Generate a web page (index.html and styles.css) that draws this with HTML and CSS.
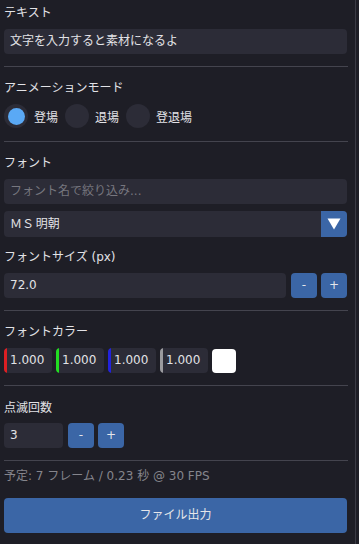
FILE: index.html
```html
<!DOCTYPE html>
<html lang="ja">
<head>
<meta charset="utf-8">
<link rel="stylesheet" href="styles.css">
</head>
<body>
<div class="window">
  <div class="panel">
    <div class="label first">テキスト</div>
    <div class="field m7">文字を入力すると素材になるよ</div>
    <div class="sep"></div>

    <div class="label">アニメーションモード</div>
    <div class="radios m7">
      <div class="radio"><span class="dot on"></span><span>登場</span></div>
      <div class="radio"><span class="dot"></span><span>退場</span></div>
      <div class="radio"><span class="dot"></span><span>登退場</span></div>
    </div>
    <div class="sep s13"></div>

    <div class="label">フォント</div>
    <div class="field m7 placeholder">フォント名で絞り込み...</div>
    <div class="combo m7">
      <div class="combo-text">ＭＳ 明朝</div>
      <div class="combo-btn"><svg width="14" height="12" viewBox="0 0 14 12"><path d="M0.5 0.5 H13.5 L7 11.5 Z" fill="#fff"/></svg></div>
    </div>

    <div class="label l11">フォントサイズ (px)</div>
    <div class="row m7">
      <div class="field grow">72.0</div>
      <div class="btn">-</div>
      <div class="btn">+</div>
    </div>
    <div class="sep"></div>

    <div class="label">フォントカラー</div>
    <div class="colors m7">
      <div class="cfield red">1.000</div>
      <div class="cfield green">1.000</div>
      <div class="cfield blue">1.000</div>
      <div class="cfield gray">1.000</div>
      <div class="swatch"></div>
    </div>
    <div class="sep"></div>

    <div class="label l13">点滅回数</div>
    <div class="row m6">
      <div class="field small">3</div>
      <div class="btn">-</div>
      <div class="btn">+</div>
    </div>
    <div class="sep"></div>

    <div class="info">予定: 7 フレーム / 0.23 秒 @ 30 FPS</div>
    <div class="export">ファイル出力</div>
  </div>
</div>
</body>
</html>
```
FILE: styles.css
```css
html, body {
  margin: 0;
  padding: 0;
  background: #1e1e26;
}
body {
  font-family: "DejaVu Sans", "Noto Sans CJK JP", sans-serif;
  font-size: 12px;
  color: #e2e2e6;
}
.window {
  width: 355px;
  min-height: 544px;
  border-right: 1px solid #3b3b45;
}
.panel {
  display: flex;
  flex-direction: column;
  padding: 4px 8px 0 4px;
}
.label {
  height: 18px;
  line-height: 18px;
  margin-top: 12px;
}
.label.first { margin-top: 0; }
.label.l11 { margin-top: 11px; }
.label.l13 { margin-top: 13px; }
.m7 { margin-top: 7px; }
.m6 { margin-top: 6px; }
.field {
  height: 25px;
  line-height: 25px;
  background: #2c2c37;
  border-radius: 4px;
  padding: 0 6px;
  box-sizing: border-box;
  white-space: nowrap;
  overflow: hidden;
}
.placeholder { color: #77777f; }
.sep {
  height: 1px;
  background: #44444e;
  margin-top: 12px;
  margin-right: -1px;
}
.sep.s13 { margin-top: 13px; }
.radios {
  display: flex;
  gap: 7px;
  height: 24px;
  align-items: center;
}
.radio {
  display: flex;
  align-items: center;
  gap: 6px;
}
.dot {
  width: 24px;
  height: 24px;
  border-radius: 50%;
  background: #2c2c37;
  display: flex;
  align-items: center;
  justify-content: center;
}
.dot.on::after {
  content: "";
  width: 17px;
  height: 17px;
  border-radius: 50%;
  background: #5aa9f5;
}
.combo {
  display: flex;
  height: 26px;
  background: #2c2c37;
  border-radius: 4px;
  overflow: hidden;
}
.combo-text {
  flex: 1;
  line-height: 26px;
  padding: 0 6px;
  word-spacing: -2px;
}
.combo-btn {
  width: 26px;
  background: #3b66a6;
  display: flex;
  align-items: center;
  justify-content: center;
}
.row {
  display: flex;
  gap: 4px;
  height: 25px;
}
.grow { flex: 1; }
.small { width: 59px; }
.btn {
  width: 26px;
  height: 25px;
  line-height: 24px;
  text-align: center;
  background: #3b66a6;
  border-radius: 4px;
  color: #e6e6ea;
}
.row .btn:nth-child(2) { margin-left: 1px; }
.colors {
  display: flex;
  gap: 4px;
  height: 25px;
  align-items: center;
}
.cfield {
  width: 48px;
  height: 25px;
  line-height: 25px;
  background: #2c2c37;
  border-radius: 4px;
  box-sizing: border-box;
  padding-left: 6px;
  position: relative;
  overflow: hidden;
}
.cfield::before {
  content: "";
  position: absolute;
  left: 0;
  top: 0;
  bottom: 0;
  width: 3px;
  border-radius: 3px 0 0 3px;
}
.red::before { background: #dc1f23; }
.green::before { background: #22dc22; }
.blue::before { background: #2222dc; }
.gray::before { background: #9a9a9e; }
.swatch {
  width: 24px;
  height: 24px;
  background: #ffffff;
  border-radius: 4px;
}
.info {
  margin-top: 6px;
  height: 18px;
  line-height: 18px;
  color: #85858c;
}
.export {
  margin-top: 13px;
  height: 35px;
  line-height: 35px;
  text-align: center;
  background: #3b66a6;
  border-radius: 4px;
  color: #e6e6ea;
}
```
